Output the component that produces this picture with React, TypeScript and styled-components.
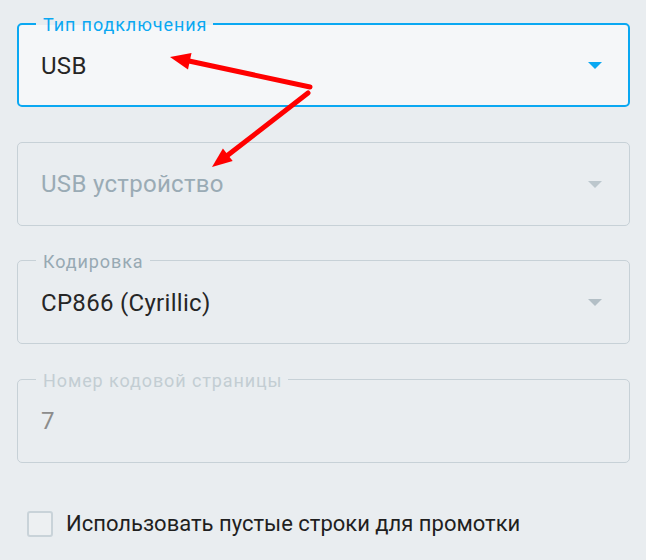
import React from "react";
import styled, { createGlobalStyle, css } from "styled-components";

const PAGE_BG = "#e9edf0";
const FOCUS_BG = "#f5f7f9";
const ACCENT = "#0aa8f2";

type FieldState = "focused" | "normal" | "disabled";

const GlobalStyle = createGlobalStyle`
  html, body {
    margin: 0;
    padding: 0;
    background: ${PAGE_BG};
    font-family: Roboto, "Noto Sans", "Liberation Sans", sans-serif;
  }
`;

const fields: {
  label?: string;
  value: string;
  state: FieldState;
  placeholder?: boolean;
  select?: boolean;
}[] = [
  { label: "Тип подключения", value: "USB", state: "focused", select: true },
  { value: "USB устройство", state: "disabled", placeholder: true, select: true },
  { label: "Кодировка", value: "CP866 (Cyrillic)", state: "normal", select: true },
  { label: "Номер кодовой страницы", value: "7", state: "disabled" },
];

const App = () => {
  return (
    <Page>
      <GlobalStyle />
      <Form>
        {fields.map((f, idx) => (
          <Field key={idx} $state={f.state}>
            {f.label ? <Label $state={f.state}>{f.label}</Label> : null}
            <Value $state={f.state} $placeholder={!!f.placeholder}>
              {f.value}
            </Value>
            {f.select ? <Caret $state={f.state} /> : null}
          </Field>
        ))}
        <CheckRow>
          <CheckBox />
          <CheckText>Использовать пустые строки для промотки</CheckText>
        </CheckRow>
      </Form>
      <Annotations width="646" height="560" viewBox="0 0 646 560">
        <line x1="310" y1="87" x2="189" y2="61" stroke="#ff0000" strokeWidth="5" strokeLinecap="round" />
        <polygon points="170,57 191.5,53 188,69.5" fill="#ff0000" />
        <line x1="308" y1="93" x2="228" y2="155" stroke="#ff0000" strokeWidth="5" strokeLinecap="round" />
        <polygon points="212,167 222.9,148.5 232.7,161.1" fill="#ff0000" />
      </Annotations>
    </Page>
  );
};

// Styled Components

const Page = styled.div`
  position: relative;
  width: 646px;
  height: 560px;
  overflow: hidden;
  background: ${PAGE_BG};
`;

const Form = styled.div`
  display: flex;
  flex-direction: column;
  gap: 34.5px;
  padding: 23px 16px 0 17px;
`;

const Field = styled.div<{ $state: FieldState }>`
  position: relative;
  box-sizing: border-box;
  height: 84px;
  display: flex;
  align-items: center;
  gap: 12px;
  padding: 1px 27px 0 23px;
  border: 1px solid #c7d1d7;
  border-radius: 5px;
  background: ${PAGE_BG};

  ${(p) =>
    p.$state === "focused" &&
    css`
      border: 2px solid ${ACCENT};
      padding: 1px 26px 0 22px;
      background: ${FOCUS_BG};
    `}
`;

const Label = styled.span<{ $state: FieldState }>`
  position: absolute;
  top: ${(p) => (p.$state === "focused" ? "-10px" : "-9px")};
  left: ${(p) => (p.$state === "focused" ? "17px" : "18px")};
  padding: 0 6px 0 7px;
  font-size: 18px;
  line-height: 20px;
  letter-spacing: 0.9px;
  color: ${(p) =>
    p.$state === "focused" ? ACCENT : p.$state === "disabled" ? "#c3cdd3" : "#97a9b3"};
  background: ${(p) =>
    p.$state === "focused"
      ? `linear-gradient(to bottom, ${PAGE_BG} 50%, ${FOCUS_BG} 50%)`
      : PAGE_BG};
`;

const Value = styled.span<{ $state: FieldState; $placeholder: boolean }>`
  flex: 1;
  font-size: 24px;
  line-height: 30px;
  letter-spacing: 0.3px;
  color: ${(p) =>
    p.$placeholder ? "#9aabb5" : p.$state === "disabled" ? "#8c8c8c" : "#262626"};
`;

const Caret = styled.span<{ $state: FieldState }>`
  width: 0;
  height: 0;
  border-left: 7px solid transparent;
  border-right: 7px solid transparent;
  border-top: 7px solid
    ${(p) => (p.$state === "focused" ? ACCENT : p.$state === "disabled" ? "#bcc7cd" : "#b3bfc6")};
`;

const CheckRow = styled.label`
  display: flex;
  align-items: center;
  gap: 13px;
  margin-top: 13px;
  padding-left: 10px;
`;

const CheckBox = styled.span`
  box-sizing: border-box;
  width: 26px;
  height: 26px;
  border: 2px solid #c9d3d9;
  border-radius: 3px;
  background: #edf0f2;
`;

const CheckText = styled.span`
  font-size: 22px;
  line-height: 28px;
  color: #1f1f1f;
`;

const Annotations = styled.svg`
  position: absolute;
  top: 0;
  left: 0;
  pointer-events: none;
`;

export default App;
